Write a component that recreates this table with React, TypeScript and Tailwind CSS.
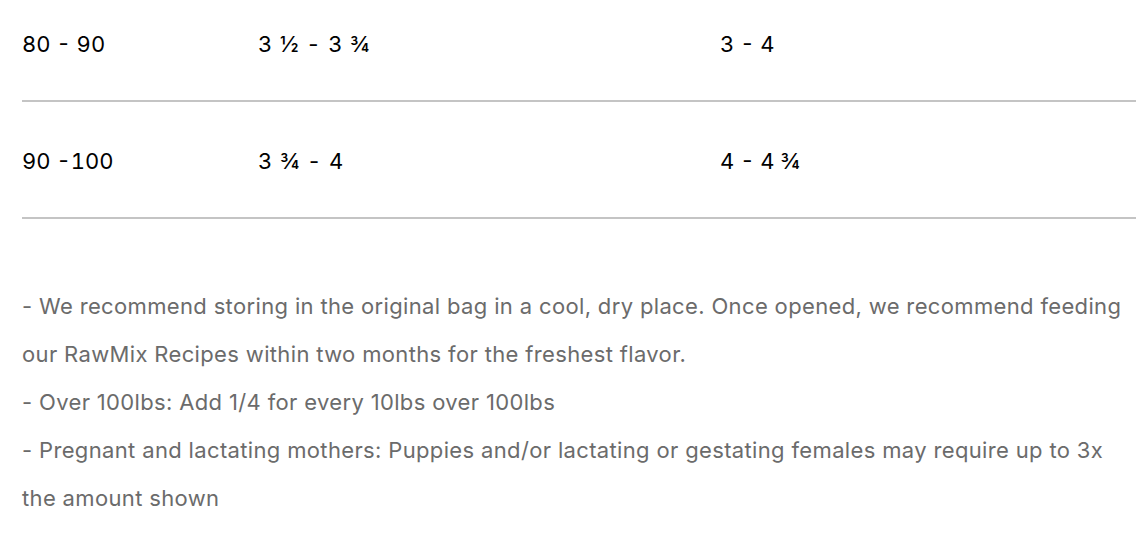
const rows = [
  { weight: "80 - 90", a: "3 ½ - 3 ¾", b: "3 - 4" },
  { weight: "90 -100", a: "3 ¾ - 4", b: "4 - 4 ¾" },
];

const notes = [
  "- We recommend storing in the original bag in a cool, dry place. Once opened, we recommend feeding our RawMix Recipes within two months for the freshest flavor.",
  "- Over 100lbs: Add 1/4 for every 10lbs over 100lbs",
  "- Pregnant and lactating mothers: Puppies and/or lactating or gestating females may require up to 3x the amount shown",
];

export default function App() {
  return (
    <div className="w-[1138px] h-[542px] overflow-hidden bg-white pl-[22px]">
      <div className="-mt-[15px] w-[1114px]">
        {rows.map((r) => (
          <div
            key={r.weight}
            className="flex items-center h-[117px] pt-[3px] border-b-2 border-[#c4c4c4] text-[22px] text-black tabular-nums font-['Inter',sans-serif]"
          >
            <div className="w-[236px]">{r.weight}</div>
            <div className="w-[462px] tracking-[0.04em]">{r.a}</div>
            <div>{r.b}</div>
          </div>
        ))}
      </div>
      <div className="mt-[63px] w-[1112px] text-[22px] tracking-[0.35px] leading-[48px] text-[#6b6b6b] font-['Inter',sans-serif]">
        {notes.map((n) => (
          <p key={n}>{n}</p>
        ))}
      </div>
    </div>
  );
}
